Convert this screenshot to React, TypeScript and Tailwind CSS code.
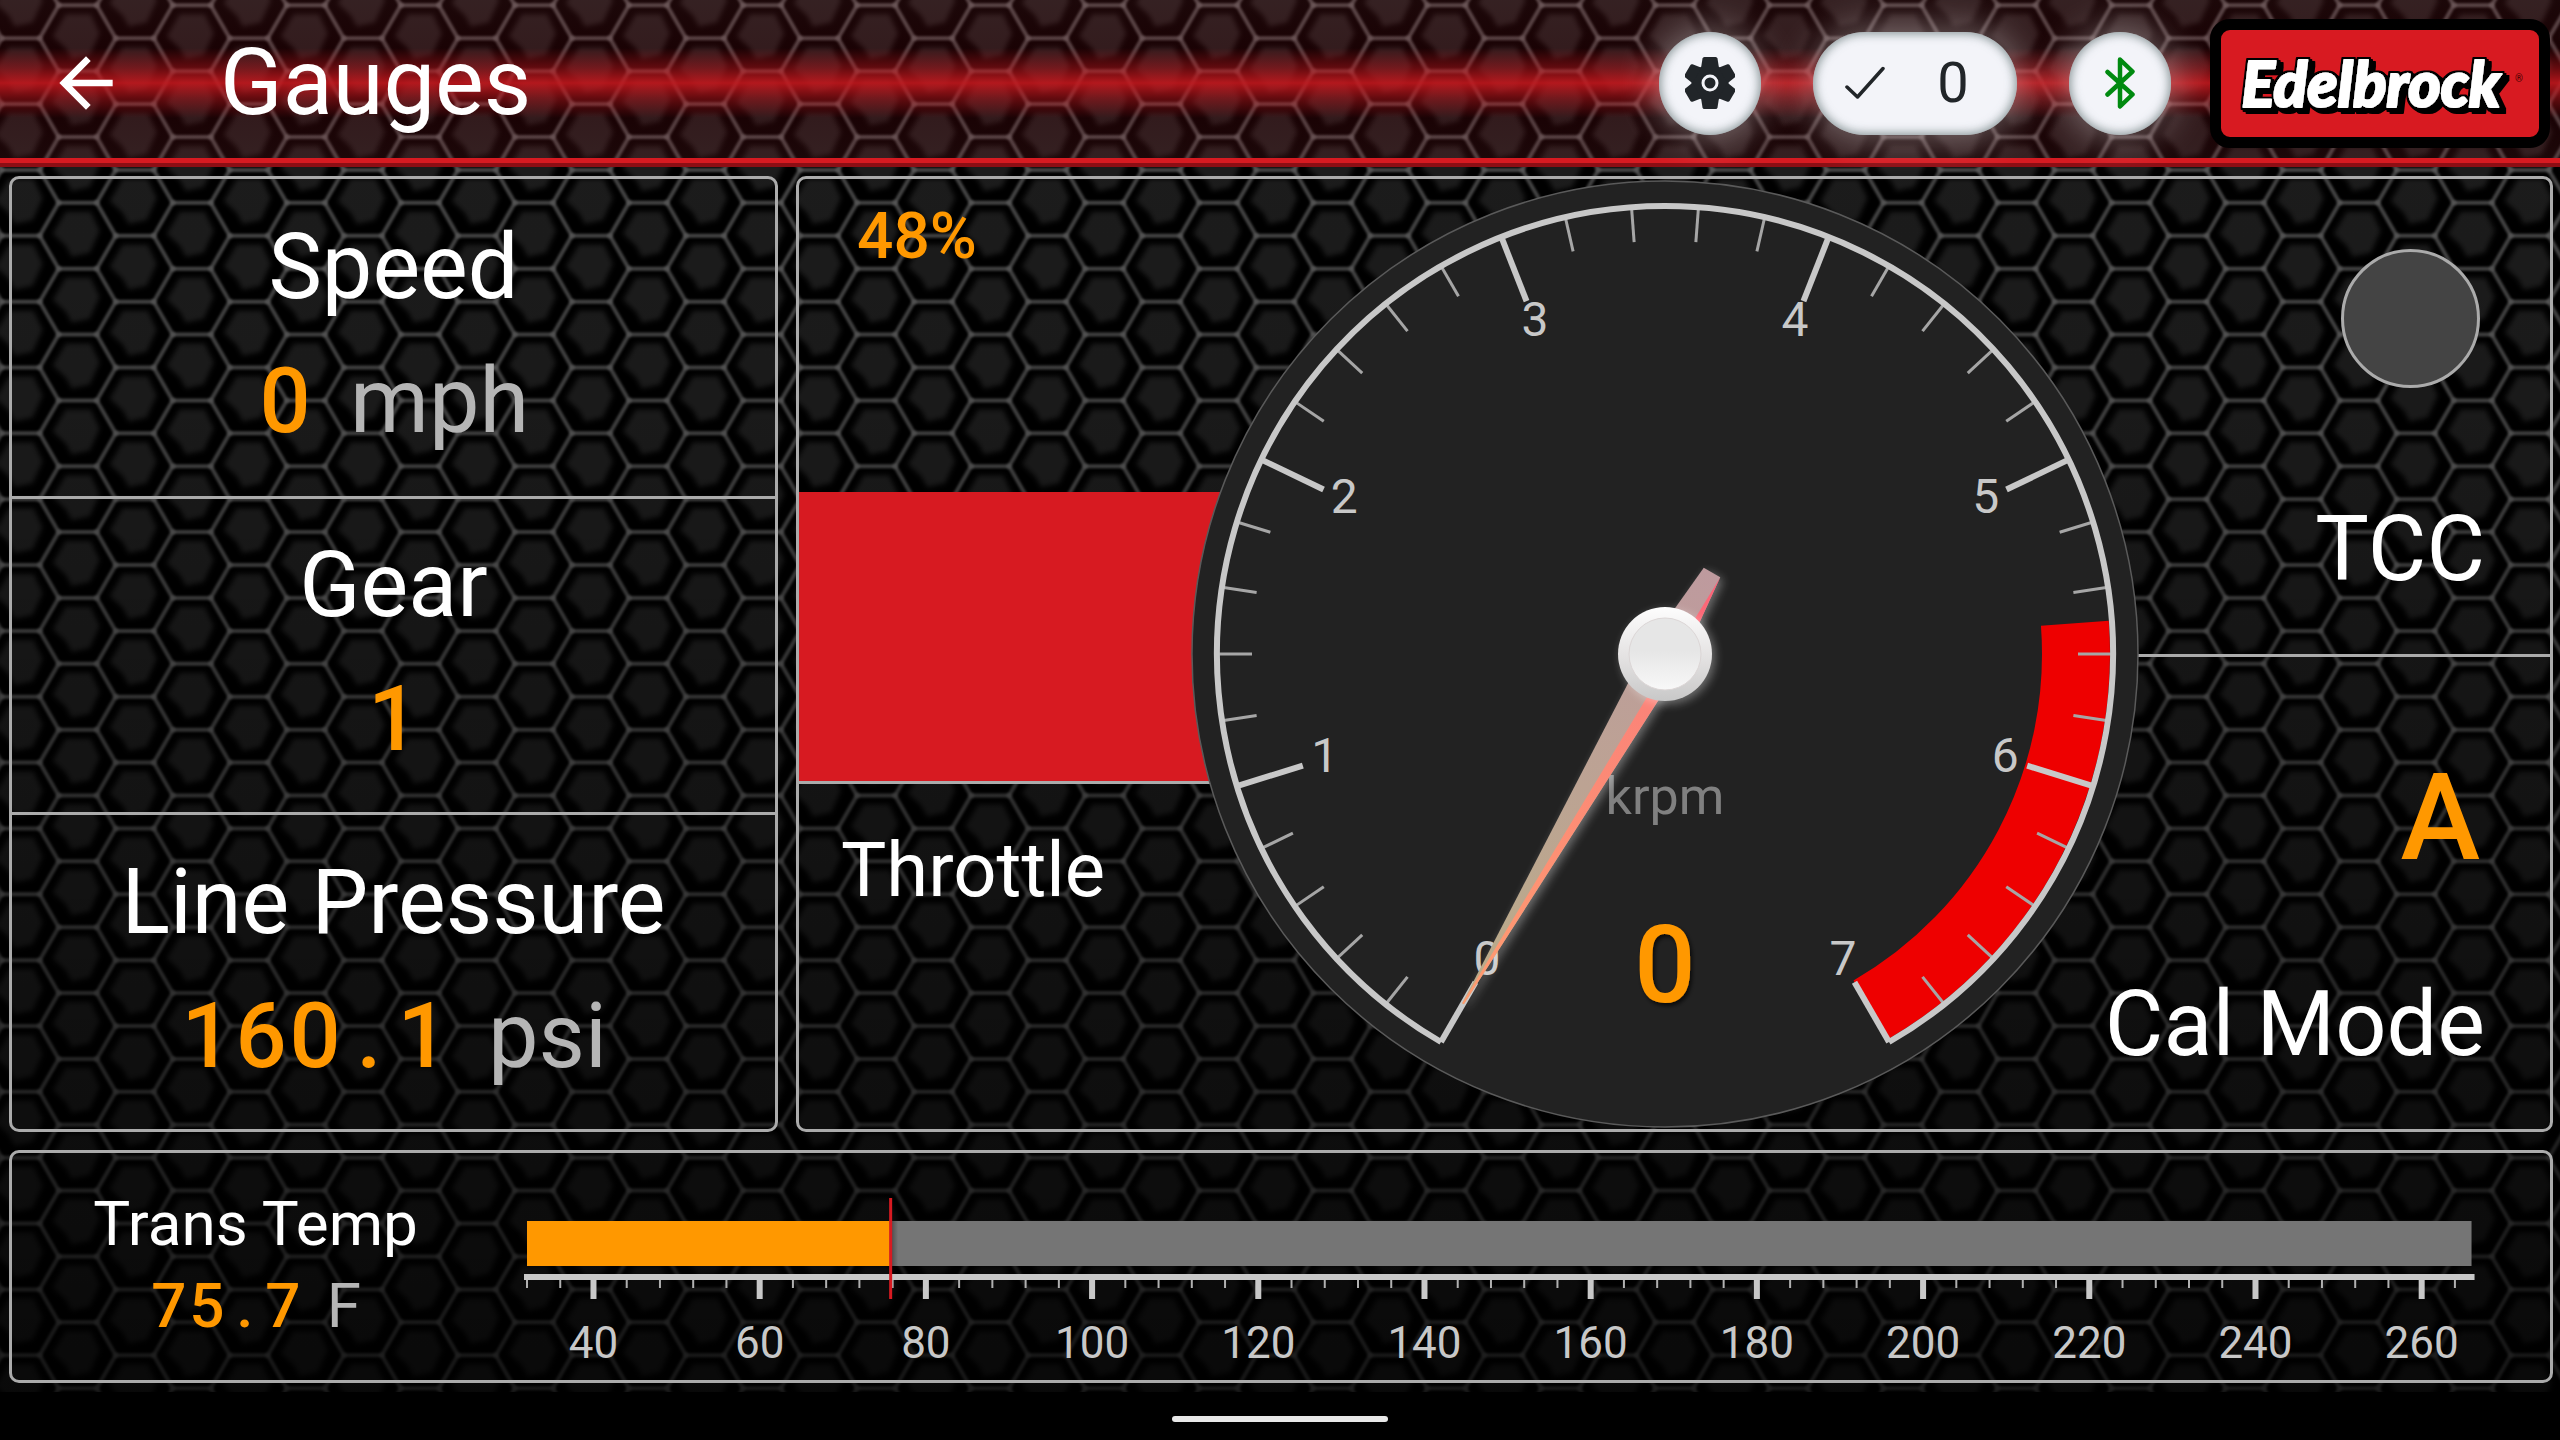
import React from "react";

const ORANGE = "#ff9800";
const LIGHT = "#c8c8c8";

/* ---------- Background ---------- */

const HEX_W = 114.05;
const HEX_H = 65.85;
const MESH = (() => {
  let lines = "";
  let cells = "";
  let joints = "";
  for (let col = -1; col < 24; col++) {
    for (let row = -1; row < 23; row++) {
      for (const odd of [0, 1]) {
        const x = 58.7 + col * HEX_W + odd * 57;
        const y = 5.3 + row * HEX_H + (odd * HEX_H) / 2;
        lines += `M${x} ${y}h38l19 ${HEX_H / 2}M${x + 38} ${y}l19 ${-HEX_H / 2}`;
        cells += `M${x - 6} ${y + 31}l13 -22h25l9 19l-10 22l-18 4l-6 -11z`;
        joints += `M${x} ${y}h.1M${x + 38} ${y}h.1`;
      }
    }
  }
  return { lines, cells, joints };
})();

function HexMesh() {
  return (
    <svg className="absolute inset-0 h-full w-full" aria-hidden="true">
      <defs>
        <filter id="soft" x="0" y="0" width="100%" height="100%" colorInterpolationFilters="sRGB">
          <feGaussianBlur stdDeviation="2.5" />
        </filter>
        <filter id="line" x="0" y="0" width="100%" height="100%" colorInterpolationFilters="sRGB">
          <feGaussianBlur stdDeviation="1.2" />
        </filter>
        <linearGradient id="fade" x1="0" y1="0" x2="0" y2="1">
          <stop offset="0" stopColor="#000" stopOpacity="0" />
          <stop offset="0.3" stopColor="#000" stopOpacity="0.12" />
          <stop offset="1" stopColor="#000" stopOpacity="0.68" />
        </linearGradient>
      </defs>
      <path d={MESH.cells} fill="#1d1d1d" filter="url(#soft)" />
      <g filter="url(#line)" fill="none" strokeLinecap="round">
        <path d={MESH.lines} stroke="#464646" strokeWidth="4" />
        <path d={MESH.joints} stroke="#585858" strokeWidth="6" />
      </g>
      <rect width="100%" height="100%" fill="url(#fade)" />
    </svg>
  );
}

/* ---------- Header ---------- */

const pill =
  "flex h-[103px] items-center justify-center rounded-full bg-[#f3f4f9] text-[#212529] shadow-[0_0_36px_6px_rgba(255,255,255,0.35),inset_0_0_10px_2px_rgba(70,90,90,0.6)]";

function Logo() {
  return (
    <div className="ml-[39px] h-[129px] w-[340px] rounded-[20px] border-[11px] border-black bg-[#d81a21]">
      <svg viewBox="0 0 318 107" className="h-full w-full" role="img" aria-label="Edelbrock">
        <defs>
          <filter id="inkEdge" x="-10%" y="-20%" width="120%" height="150%">
            <feMorphology in="SourceAlpha" operator="dilate" radius="1.500" result="rim" />
            <feOffset in="rim" dx="2" dy="2" result="step1" />
            <feOffset in="rim" dx="5" dy="4" result="step2" />
            <feMerge result="ink">
              <feMergeNode in="rim" />
              <feMergeNode in="step1" />
              <feMergeNode in="step2" />
            </feMerge>
            <feMerge>
              <feMergeNode in="ink" />
              <feMergeNode in="SourceGraphic" />
            </feMerge>
          </filter>
        </defs>
        <text
          x="150"
          y="77"
          fontFamily="Lato, sans-serif"
          fontWeight="900"
          fontStyle="italic"
          fontSize="62"
          textAnchor="middle"
          fill="#fff"
          stroke="#fff"
          strokeWidth="2"
          strokeLinejoin="round"
          filter="url(#inkEdge)"
        >
          Edelbrock
        </text>
        <text x="294" y="52" fontFamily="Roboto, sans-serif" fontSize="10" fill="#400">
          ®
        </text>
      </svg>
    </div>
  );
}

function Header() {
  return (
    <header className="relative border-b-4 border-[#8c0e14]">
      <div className="flex h-[163px] items-center border-b-[5px] border-[#d71a21] bg-[linear-gradient(to_bottom,rgba(216,60,70,0.13)_0px,rgba(200,20,35,0.13)_48px,rgba(200,22,30,0.5)_68px,rgba(200,24,30,0.88)_83px,rgba(200,22,30,0.5)_98px,rgba(200,20,35,0.13)_118px,rgba(216,60,70,0.13)_158px)] pt-2 pr-2.5 pl-[46px]">
        <button type="button" aria-label="Back" className="text-white">
          <svg viewBox="0 0 24 24" className="h-20 w-20" fill="currentColor">
            <path d="M20 11H7.83l5.59-5.59L12 4l-8 8 8 8 1.41-1.41L7.83 13H20v-2z" />
          </svg>
        </button>
        <h1 className="ml-[94px] flex-1 text-[92px] leading-none text-white">Gauges</h1>
        <button type="button" aria-label="Settings" className={`${pill} w-[102px]`}>
          <svg viewBox="0 0 50 52" className="h-[52px] w-[50px]">
            <g fill="#212529" transform="translate(25 26)">
              <circle r="18.5" />
              {[0, 60, 120, 180, 240, 300].map((a) => (
                <path
                  key={a}
                  transform={`rotate(${a})`}
                  d="M-9 -15 L-7.5 -24.5 Q-7.2 -26 -5.6 -26 H5.6 Q7.2 -26 7.5 -24.5 L9 -15 Z"
                />
              ))}
            </g>
            <circle cx="25" cy="26" r="7" fill="#212529" stroke="#f3f4f9" strokeWidth="3" />
          </svg>
        </button>
        <button type="button" aria-label="Faults: 0" className={`${pill} ml-[52px] w-[204px] gap-[52px] pr-4`}>
          <svg viewBox="0 0 40 34" className="h-[34px] w-10" fill="none" stroke="#212529" strokeWidth="3.500" strokeLinecap="round" strokeLinejoin="round">
            <path d="M2 21 L12.500 31 L38 2.500" />
          </svg>
          <span className="text-[56px] leading-none">0</span>
        </button>
        <button type="button" aria-label="Bluetooth" className={`${pill} ml-[52px] w-[102px]`}>
          <svg viewBox="0 0 30 52" className="h-[52px] w-[30px]" fill="none" stroke="#008a10" strokeWidth="4.500" strokeLinecap="round" strokeLinejoin="round">
            <path d="M2.500 15 L27.500 37.500 L15 49.500 V2.500 L27.500 14.500 L2.500 37.500" />
          </svg>
        </button>
        <Logo />
      </div>
    </header>
  );
}

/* ---------- Readouts ---------- */

function Digits({ value, cell }: { value: string; cell: string }) {
  return (
    <span className="inline-flex font-medium text-[#ff9800]">
      {value.split("").map((c, i) => (
        <span key={i} className={`inline-block text-center ${cell}`}>
          {c}
        </span>
      ))}
    </span>
  );
}

const panel = "rounded-[10px] border-[3px] border-[#ababab]";

const READOUTS = [
  { label: "Speed", value: "0", unit: "mph" },
  { label: "Gear", value: "1", unit: "" },
  { label: "Line Pressure", value: "160.1", unit: "psi" },
];

function Readouts() {
  return (
    <section className={`${panel} grid grid-rows-3`}>
      {READOUTS.map((r) => (
        <div
          key={r.label}
          className="flex flex-col items-center justify-center gap-[34px] border-[#ababab] pb-1 text-[90px] leading-[100px] not-first:border-t-[3px]"
        >
          <h2 className="text-white">{r.label}</h2>
          <p className="flex items-baseline gap-[38px]">
            <Digits value={r.value} cell="w-[54px]" />
            {r.unit && <span className="text-[#b5b5b5]">{r.unit}</span>}
          </p>
        </div>
      ))}
    </section>
  );
}

/* ---------- Tachometer ---------- */

const MAX_RPM = 7;
const SWEEP = 300;
const angleOf = (v: number) => 210 + (v / MAX_RPM) * SWEEP;
function point(v: number, r: number) {
  const a = (angleOf(v) * Math.PI) / 180;
  return [r * Math.sin(a), -r * Math.cos(a)];
}
function arc(from: number, to: number, r: number) {
  const [x1, y1] = point(from, r);
  const [x2, y2] = point(to, r);
  const large = ((to - from) / MAX_RPM) * SWEEP > 180 ? 1 : 0;
  return `M${x1} ${y1} A${r} ${r} 0 ${large} 1 ${x2} ${y2}`;
}

function Tachometer({ value }: { value: number }) {
  const ticks = Array.from({ length: 36 }, (_, i) => i);
  return (
    <svg viewBox="-475 -475 950 950" className="aspect-square w-full" role="img" aria-label={`Engine speed ${value} krpm`}>
      <defs>
        <linearGradient id="needleWarm" x1="0" y1="-404" x2="0" y2="94" gradientUnits="userSpaceOnUse">
          <stop offset="0" stopColor="#ff9c70" />
          <stop offset="0.7" stopColor="#fb8478" />
          <stop offset="1" stopColor="#fd5f77" />
        </linearGradient>
        <linearGradient id="needleDull" x1="0" y1="-404" x2="0" y2="94" gradientUnits="userSpaceOnUse">
          <stop offset="0" stopColor="#baac88" />
          <stop offset="1" stopColor="#be9a9e" />
        </linearGradient>
        <linearGradient id="hubRim" x1="0" y1="0" x2="0" y2="1">
          <stop offset="0" stopColor="#fdfdfd" />
          <stop offset="0.5" stopColor="#e6e4e4" />
          <stop offset="1" stopColor="#c8c8c8" />
        </linearGradient>
        <linearGradient id="hubCap" x1="0" y1="0" x2="0" y2="1">
          <stop offset="0.450" stopColor="#e6e6e6" />
          <stop offset="1" stopColor="#f8f8f8" />
        </linearGradient>
        <filter id="glow" x="-50%" y="-50%" width="200%" height="200%" colorInterpolationFilters="sRGB">
          <feDropShadow dx="3" dy="3" stdDeviation="5" floodColor="#fff" floodOpacity="0.35" />
        </filter>
        <filter id="drop" x="-50%" y="-50%" width="200%" height="200%">
          <feDropShadow dx="2" dy="3" stdDeviation="2" floodColor="#000" floodOpacity="0.7" />
        </filter>
      </defs>
      <circle r="473" fill="#222" stroke="#5a5a5a" strokeWidth="1.500" />
      <path d={arc(5.5, 7, 411)} fill="none" stroke="#ee0000" strokeWidth="68" />
      {ticks.map((i) => {
        const major = i % 5 === 0;
        const [x1, y1] = point(i / 5, 448);
        const [x2, y2] = point(i / 5, major ? 379 : 413);
        return (
          <line key={i} x1={x1} y1={y1} x2={x2} y2={y2} stroke={major ? LIGHT : "#a6a6a6"} strokeWidth={major ? 6 : 3} />
        );
      })}
      <path d={arc(0, 7, 448)} fill="none" stroke={LIGHT} strokeWidth="6" />
      <g fontFamily="Roboto, sans-serif" textAnchor="middle">
        {Array.from({ length: MAX_RPM + 1 }, (_, v) => {
          const [x, y] = point(v, 356);
          return (
            <text key={v} x={x} y={y + 13} fontSize="48" fill={LIGHT}>
              {v}
            </text>
          );
        })}
        <text x="0" y="160" fontSize="52" fill="#808080">
          krpm
        </text>
        <text x="0" y="348" fontSize="108" fontWeight="500" fill={ORANGE} filter="url(#drop)">
          {value}
        </text>
      </g>
      <g filter="url(#glow)">
        <g transform={`rotate(${angleOf(value)})`}>
          <path d="M-1 -404 H1 L18 -30 Q18 0 16 25 L9.500 94 H-9.500 L-16 25 Q-18 0 -18 -30 Z" fill="url(#needleDull)" />
          <path d="M-1 -404 H1 L-6 -46 L-9.500 94 L-16 25 Q-18 0 -18 -30 Z" fill="url(#needleWarm)" />
        </g>
      </g>
      <circle r="47" fill="url(#hubRim)" filter="url(#glow)" />
      <circle r="36" fill="url(#hubCap)" stroke="#dcd6d6" strokeWidth="1" />
    </svg>
  );
}

/* ---------- Centre panel ---------- */

function EnginePanel() {
  const throttle = 48;
  return (
    <section className={`${panel} grid grid-cols-[391fr_950fr_410fr] grid-rows-1`}>
      <div className="col-span-2 col-start-1 row-start-1 flex w-1/2 flex-col">
        <div className="relative flex h-[605px] flex-col justify-end border-b-[3px] border-[#ababab]">
          <p className="absolute top-[26px] left-[58px] text-[64px] leading-[64px] font-medium text-[#ff9800]">{throttle}%</p>
          <div className="bg-[#d71a21]" style={{ height: `${throttle}%` }} />
        </div>
        <h2 className="mt-11 ml-[42px] text-[76px] leading-[84px] text-white">Throttle</h2>
      </div>
      <div className="col-span-2 col-start-2 row-start-1 grid grid-rows-2 text-right text-[90px] leading-[100px] text-white">
        <div className="flex flex-col items-end justify-between pt-[70px] pr-[65px] pb-[54px]">
          <span className="mr-[5px] h-[139px] w-[139px] rounded-full border-[3px] border-[#ababab] bg-[#444]" role="img" aria-label="TCC off" />
          <h2>TCC</h2>
        </div>
        <div className="flex flex-col items-end justify-between border-t-[3px] border-[#ababab] pt-[101px] pr-[65px] pb-[54px]">
          <span className="mr-[5px] text-[120px] leading-[120px] font-medium text-[#ff9800]">A</span>
          <h2>Cal Mode</h2>
        </div>
      </div>
      <div className="z-10 col-start-2 row-start-1">
        <Tachometer value={0} />
      </div>
    </section>
  );
}

/* ---------- Transmission temperature ---------- */

const T_MIN = 32;
const T_MAX = 266;
const SCALE_LEFT = 3;
const PX_PER_DEG = 8.31;
const tempX = (t: number) => SCALE_LEFT + (t - T_MIN) * PX_PER_DEG;

function TempScale({ value }: { value: number }) {
  const minor: number[] = [];
  for (let t = T_MIN; t <= T_MAX; t += 4) minor.push(t);
  const major: number[] = [];
  for (let t = 40; t <= T_MAX; t += 20) major.push(t);
  const end = tempX(T_MAX);
  const now = tempX(value);
  return (
    <svg viewBox="0 -30 1952 213" className="w-full" role="img" aria-label={`Transmission temperature ${value} F`}>
      <defs>
        <linearGradient id="edge" x1="0" y1="0" x2="1" y2="0">
          <stop offset="0" stopColor="#000" stopOpacity="0.4" />
          <stop offset="1" stopColor="#000" stopOpacity="0" />
        </linearGradient>
      </defs>
      <rect x={SCALE_LEFT} y="31" width={end - SCALE_LEFT} height="45" fill="#757575" />
      <rect x={now} y="31" width="8" height="45" fill="url(#edge)" />
      <rect x={SCALE_LEFT} y="31" width={now - SCALE_LEFT} height="45" fill={ORANGE} />
      <rect x="0" y="84" width={end + 3} height="6" fill={LIGHT} />
      {minor.map((t) => (
        <rect key={t} x={tempX(t) - 1} y="90" width="2" height="8" fill="#b0b0b0" />
      ))}
      {major.map((t) => (
        <g key={t}>
          <rect x={tempX(t) - 3} y="90" width="6" height="19" fill={LIGHT} />
          <text x={tempX(t)} y="168" textAnchor="middle" fontFamily="Roboto, sans-serif" fontSize="44" fill={LIGHT}>
            {t}
          </text>
        </g>
      ))}
      <rect x={now - 1} y="8" width="3" height="101" fill="#d71a21" />
    </svg>
  );
}

function TransTemp() {
  return (
    <section className={`${panel} flex h-[233px] items-center pr-[74px]`}>
      <div className="flex w-[487px] shrink-0 flex-col items-center pb-1 text-[62px] leading-[82px]">
        <h2 className="text-white">Trans Temp</h2>
        <p className="flex items-baseline gap-[25px]">
          <Digits value="75.7" cell="w-[38px]" />
          <span className="text-[#b5b5b5]">F</span>
        </p>
      </div>
      <div className="ml-[25px] flex-1">
        <TempScale value={75.7} />
      </div>
    </section>
  );
}

export default function App() {
  return (
    <div className="flex min-h-screen flex-col bg-black font-[Roboto,sans-serif]">
      <div className="relative flex-1 overflow-hidden">
        <HexMesh />
        <Header />
        <main className="relative flex flex-col gap-[18px] pt-[9px] pr-[7px] pb-[9px] pl-[9px]">
          <div className="grid grid-cols-[769fr_1757fr] gap-[18px]">
            <Readouts />
            <EnginePanel />
          </div>
          <TransTemp />
        </main>
      </div>
      <nav className="flex h-12 items-center justify-center pt-1.5">
        <button type="button" aria-label="Home" className="h-[6px] w-[216px] rounded-full bg-[#e8e8e8]" />
      </nav>
    </div>
  );
}
